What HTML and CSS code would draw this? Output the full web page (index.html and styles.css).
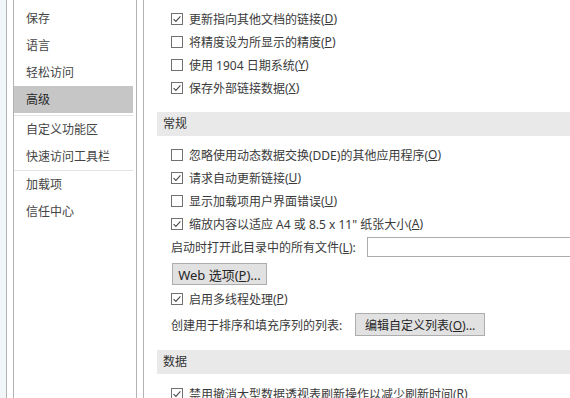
FILE: index.html
```html
<!DOCTYPE html>
<html lang="zh-CN">
  <head>
    <meta charset="UTF-8" />
    <meta name="viewport" content="width=device-width, initial-scale=1.0" />
    <title>Excel 选项 - 高级</title>
    <link rel="stylesheet" href="styles.css">
  </head>
  <body>
    <div class="window">
      <div class="edge"></div>
      <div class="frame">
        <!-- 左侧分类 -->
        <ul class="nav">
          <li>保存</li>
          <li>语言</li>
          <li>轻松访问</li>
          <li class="active">高级</li>
          <li class="sep"></li>
          <li>自定义功能区</li>
          <li>快速访问工具栏</li>
          <li class="sep sep-tight"></li>
          <li>加载项</li>
          <li>信任中心</li>
        </ul>

        <!-- 右侧选项 -->
        <div class="content">
          <div class="group">
            <label class="row"><svg class="box" width="12" height="12" viewBox="0 0 12 12"><rect x="0.5" y="0.5" width="11" height="11" /><path d="M2.6 6.1 L4.9 8.4 L9.4 3.4" /></svg>更新指向其他文档的链接(<u>D</u>)</label>
            <label class="row"><svg class="box" width="12" height="12" viewBox="0 0 12 12"><rect x="0.5" y="0.5" width="11" height="11" /></svg>将精度设为所显示的精度(<u>P</u>)</label>
            <label class="row"><svg class="box" width="12" height="12" viewBox="0 0 12 12"><rect x="0.5" y="0.5" width="11" height="11" /></svg>使用 1904 日期系统(<u>Y</u>)</label>
            <label class="row"><svg class="box" width="12" height="12" viewBox="0 0 12 12"><rect x="0.5" y="0.5" width="11" height="11" /><path d="M2.6 6.1 L4.9 8.4 L9.4 3.4" /></svg>保存外部链接数据(<u>X</u>)</label>
          </div>

          <div class="section-title">常规</div>
          <div class="group">
            <label class="row"><svg class="box" width="12" height="12" viewBox="0 0 12 12"><rect x="0.5" y="0.5" width="11" height="11" /></svg>忽略使用动态数据交换(DDE)的其他应用程序(<u>O</u>)</label>
            <label class="row"><svg class="box" width="12" height="12" viewBox="0 0 12 12"><rect x="0.5" y="0.5" width="11" height="11" /><path d="M2.6 6.1 L4.9 8.4 L9.4 3.4" /></svg>请求自动更新链接(<u>U</u>)</label>
            <label class="row"><svg class="box" width="12" height="12" viewBox="0 0 12 12"><rect x="0.5" y="0.5" width="11" height="11" /></svg>显示加载项用户界面错误(<u>U</u>)</label>
            <label class="row"><svg class="box" width="12" height="12" viewBox="0 0 12 12"><rect x="0.5" y="0.5" width="11" height="11" /><path d="M2.6 6.1 L4.9 8.4 L9.4 3.4" /></svg>缩放内容以适应 A4 或 8.5 x 11" 纸张大小(<u>A</u>)</label>
            <div class="row field-row">
              <span>启动时打开此目录中的所有文件(<u>L</u>):</span>
              <span class="textbox"></span>
            </div>
            <div class="btn-row">
              <button class="btn web-btn">Web 选项(<u>P</u>)...</button>
            </div>
            <label class="row row-thread"><svg class="box" width="12" height="12" viewBox="0 0 12 12"><rect x="0.5" y="0.5" width="11" height="11" /><path d="M2.6 6.1 L4.9 8.4 L9.4 3.4" /></svg>启用多线程处理(<u>P</u>)</label>
            <div class="row list-row">
              <span>创建用于排序和填充序列的列表:</span>
              <button class="btn list-btn">编辑自定义列表(<u>O</u>)...</button>
            </div>
          </div>

          <div class="section-title data-title">数据</div>
          <div class="group">
            <label class="row"><svg class="box" width="12" height="12" viewBox="0 0 12 12"><rect x="0.5" y="0.5" width="11" height="11" /><path d="M2.6 6.1 L4.9 8.4 L9.4 3.4" /></svg>禁用撤消大型数据透视表刷新操作以减少刷新时间(<u>R</u>)</label>
          </div>
        </div>
      </div>
    </div>
  </body>
</html>
```

FILE: styles.css
```css
body {
  margin: 0;
  font-family: "Noto Sans", "Noto Sans CJK SC", sans-serif;
  font-size: 12px;
  color: #3a3a3a;
  background: #fff;
}
.window {
  display: flex;
  height: 398px;
  overflow: hidden;
}
.edge {
  width: 6px;
  flex: none;
  background: #f1f6f9;
}
.frame {
  display: flex;
  flex: 1;
  min-width: 0;
  border-left: 1px solid #b3b3b3;
  padding-left: 6px;
}

/* 左侧分类 */
.nav {
  list-style: none;
  margin: 0;
  padding: 5px 3px 0 0;
  width: 119px;
  flex: none;
  border-left: 1px solid #b3b3b3;
  border-right: 1px solid #b3b3b3;
}
.nav > li {
  height: 27px;
  line-height: 27px;
  padding-left: 12px;
  color: #444;
}
.nav > li.active {
  background-color: #c6c6c6;
  color: #262626;
}
.nav > li.sep {
  height: 1px;
  margin: 2px 0 0;
  padding: 0;
  background-color: #e3e3e3;
}
.nav > li.sep-tight {
  margin-top: 0;
}

/* 右侧选项 */
.content {
  flex: 1;
  min-width: 0;
  margin-left: 6px;
  border-left: 1px solid #b3b3b3;
  padding: 7px 0 0 13px;
  overflow: hidden;
}
.group {
  padding-left: 14px;
}
.row {
  display: flex;
  align-items: center;
  height: 23px;
  white-space: nowrap;
}
.box {
  flex: none;
  margin-right: 6px;
}
.box rect {
  fill: #fff;
  stroke: #707070;
}
.box path {
  fill: none;
  stroke: #4a4a4a;
  stroke-width: 1.1;
}
.section-title {
  height: 24px;
  line-height: 24px;
  margin: 13px 0 7px;
  padding-left: 6px;
  background-color: #e9e9e9;
  color: #333;
}
.data-title {
  margin-top: 13px;
  margin-bottom: 8px;
}
.field-row {
  height: 24px;
}
.textbox {
  flex: none;
  width: 240px;
  height: 18px;
  margin-left: 11px;
  border: 1px solid #ababab;
  background: #fff;
}
.btn-row {
  margin-top: 4px;
  padding-left: 1px;
}
.btn {
  font: inherit;
  color: #262626;
  background-color: #e1e1e1;
  border: 1px solid #adadad;
  padding: 0;
  white-space: nowrap;
}
.web-btn {
  width: 95px;
  height: 22px;
  font-size: 13px;
}
.row-thread {
  margin-top: 2px;
}
.list-row {
  height: 25px;
  margin-top: 2px;
}
.list-btn {
  width: 130px;
  height: 23px;
  margin-left: 13px;
  font-size: 12px;
}
```
